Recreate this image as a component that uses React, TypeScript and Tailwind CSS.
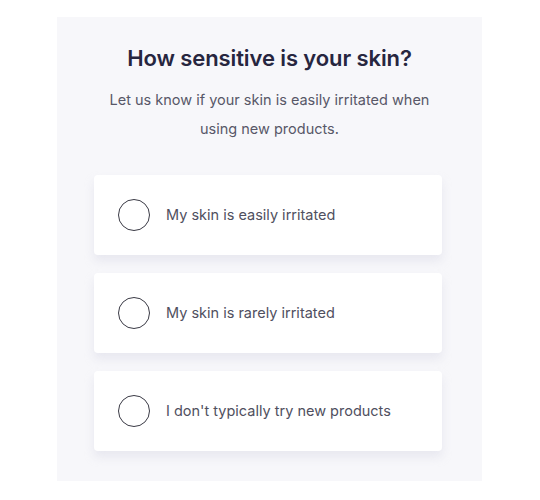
import React, { useState } from "react";

const options = [
  "My skin is easily irritated",
  "My skin is rarely irritated",
  "I don't typically try new products",
];

export default function App() {
  const [selected, setSelected] = useState<number | null>(null);

  return (
    <div className="w-[540px] h-[500px] bg-white pt-[17px] pl-[57px] font-['Inter',sans-serif]">
      <div className="w-[425px] h-[464px] bg-[#f7f7fa] flex flex-col items-center pt-[26px]">
        <h2 className="text-[22px] font-semibold leading-[30px] text-[#27263f] tracking-[-0.1px]">
          How sensitive is your skin?
        </h2>
        <p className="mt-[12px] w-[340px] text-center text-[14.5px] leading-[29px] text-[#585868]">
          Let us know if your skin is easily irritated when using new products.
        </p>

        {/* Options */}
        <div className="mt-[32px] flex flex-col gap-[18px] w-[348px] ml-[-3px]">
          {options.map((label, i) => (
            <button
              key={label}
              onClick={() => setSelected(i)}
              className="h-[80px] flex items-center gap-[16px] px-[24px] bg-white rounded-[4px] shadow-[0_6px_10px_rgba(225,225,235,0.7)] text-left"
            >
              <span className="w-[32px] h-[32px] rounded-full border border-[#3a3a45] flex items-center justify-center">
                {selected === i && <span className="w-[18px] h-[18px] rounded-full bg-[#27263f]" />}
              </span>
              <span className="text-[14.5px] text-[#505060]">{label}</span>
            </button>
          ))}
        </div>
      </div>
    </div>
  );
}
